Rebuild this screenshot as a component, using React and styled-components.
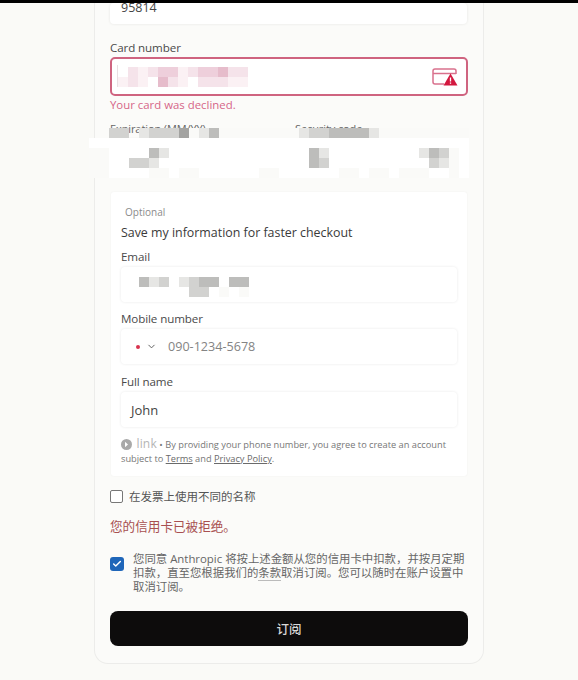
import React from 'react';
import styled, { createGlobalStyle } from 'styled-components';
import { ChevronDown, Check } from 'lucide-react';

const Global = createGlobalStyle`
  html, body { margin: 0; padding: 0; height: 680px; overflow: hidden; background: #fafaf7; }
  * { box-sizing: border-box; }
  body { font-family: "Open Sans", "Noto Sans CJK SC", sans-serif; color: #3c3c3c; }
`;

const TopBar = styled.div`height: 3px; background: #000;`;
const Panel = styled.main`
  width: 390px; height: 661px; margin-left: 94px;
  padding: 0 16px 0;
  border: 1px solid #ececea; border-top: 0;
  border-radius: 0 0 14px 14px;
  background: #fbfbf9;
  display: flex; flex-direction: column;
`;
const Field = styled.div`
  height: 35px;
  background: #fff;
  border-radius: 4px;
  box-shadow: 0 0 3px rgba(0,0,0,.09);
  display: flex; align-items: center;
  padding: 0 10px;
  font-size: 13px;
  color: #444;
  position: relative;
`;
const ZipField = styled(Field)`height: 21px; align-items: flex-start; line-height: 9px; padding: 0 11px; font-size: 12.5px; margin: 0 0 0 -1px; overflow: hidden; width: 357px;`;
const Label = styled.label`
  display: block; font-size: 11.6px; line-height: 16px; color: #4a4a4a; letter-spacing: -.1px;
`;
const CardLabel = styled(Label)`margin: 16px 0 1px -1px;`;
const CardInput = styled.div`
  position: relative; height: 39px; width: 358px; margin-left: -1px;
  background: #fff; border: 2px solid #cf6480; border-radius: 5px;
  display: flex; align-items: center; justify-content: flex-end; padding-right: 8px;
`;
const Caret = styled.span`position: absolute; left: 5px; top: 6px; width: 1px; height: 22px; background: #e9dfe2;`;
const ErrorText = styled.div`font-size: 11.4px; line-height: 16px; color: #d66688; margin: 1px 0 0 -1px;`;
const Mosaic = styled.div`
  position: absolute;
  left: ${p => p.$x}px; top: ${p => p.$y}px;
  display: grid;
  grid-template-columns: repeat(${p => p.$cols}, 10px);
  grid-auto-rows: 10px;
  pointer-events: none;
`;
const Cell = styled.i`display: block; background: ${p => p.$c};`;
const ExpiryRow = styled.div`
  position: relative; height: 63px; margin-top: 8px;
  display: grid; grid-template-columns: 171px 171px; column-gap: 14px; margin-left: -1px; width: 357px;
`;
const ExpiryCol = styled.div`display: flex; flex-direction: column; gap: 2px;`;
const ExpiryField = styled(Field)`height: 36px;`;
const SmallLabel = styled(Label)`font-size: 11px; color: #666;`;
const SaveBox = styled.section`
  width: 356px; height: 284px; margin-top: 8px;
  background: #fff; border-radius: 3px; box-shadow: 0 0 2px rgba(0,0,0,.05);
  padding: 13px 10px 0;
  display: flex; flex-direction: column;
`;
const Optional = styled.div`font-size: 10px; line-height: 14px; color: #8b8b8b; margin-left: 4px;`;
const SaveTitle = styled.div`font-size: 12.4px; line-height: 16px; color: #3a3a3a; margin-top: 6px;`;
const BoxLabel = styled(Label)`margin: ${p => p.$mt}px 0 2px;`;
const FlagDot = styled.span`width: 4px; height: 4px; border-radius: 50%; background: #d8334f; margin-left: 5px;`;
const Chev = styled(ChevronDown)`margin: 0 11px 0 6px; color: #555;`;
const Placeholder = styled.span`color: #848484; font-size: 12.6px;`;
const Legal = styled.p`margin: 10px 0 0; font-size: 9.25px; line-height: 14px; color: #777;`;
const LinkLogo = styled.span`font-size: 12px; color: #b5b5b5; margin-left: 2px; letter-spacing: .2px;`;
const LegalLink = styled.a`color: #6a6a6a; text-decoration: underline;`;
const LogoSvg = styled.svg`vertical-align: -2px;`;
const BoxCheckRow = styled.div`display: flex; align-items: center; gap: 6px; margin-top: 13px; height: 14px; font-size: 11.5px; color: #555;`;
const EmptyBox = styled.span`width: 13px; height: 13px; border: 1px solid #777; border-radius: 2px; background: #fff; margin-left: -1px;`;
const Declined = styled.div`margin: 15px 0 0 -1px; font-size: 12.6px; line-height: 18px; color: #a85050;`;
const ConsentRow = styled.div`display: flex; gap: 9px; margin-top: 16px;`;
const CheckedBox = styled.span`
  flex: none; width: 14px; height: 14px; margin: 5px 0 0 -1px; border-radius: 3px; background: #1f66b9;
  display: flex; align-items: center; justify-content: center; color: #fff;
`;
const Consent = styled.p`margin: 0; width: 336px; font-size: 11.4px; line-height: 14px; color: #666;`;
const ConsentLink = styled.span`border-bottom: 1px solid #bbb;`;
const Subscribe = styled.button`
  width: 358px; height: 35px; margin: 17px 0 0 -1px; border: 0; border-radius: 8px;
  background: #0d0c0c; color: #d9d9d9; font: inherit; font-size: 12.5px; font-weight: 500;
  font-family: "Noto Sans CJK SC", sans-serif;
`;

const palette = {
  '.': 'transparent', w: '#ffffff', a: '#fafaf8', b: '#e6e6e4', c: '#d2d2d0', d: '#bdbdbb', e: '#a3a3a1',
  p: '#fbf1f4', q: '#f5e3ea', r: '#eecfdb', s: '#e6bccb',
};

const Pixels = ({ x, y, rows }) => (
  <Mosaic $x={x} $y={y} $cols={rows[0].length}>
    {rows.join('').split('').map((k, i) => <Cell key={i} $c={palette[k]} />)}
  </Mosaic>
);

const CardIcon = () => (
  <svg width="26" height="18" viewBox="0 0 26 18" fill="none">
    <path d="M12 16H3a2 2 0 0 1-2-2V3a2 2 0 0 1 2-2h19a2 2 0 0 1 2 2v3" stroke="#d9718d" strokeWidth="1.5" />
    <path d="M1 5.5h23" stroke="#d9718d" strokeWidth="1.5" />
    <path d="M18.5 5.5 25.5 17.5H11.5Z" fill="#d3183f" />
    <path d="M18.5 9.5v4M18.5 14.6v1.2" stroke="#fff" strokeWidth="1.3" />
  </svg>
);

const LinkMark = () => (
  <LogoSvg width="11" height="11" viewBox="0 0 11 11">
    <circle cx="5.5" cy="5.5" r="5.5" fill="#a9a9a9" />
    <path d="M4 2.8 7 5.5 4 8.2Z" fill="#fff" />
  </LogoSvg>
);

export default function App() {
  return (
    <>
      <Global />
      <TopBar />
      <Panel>
        <ZipField>95814</ZipField>
        <CardLabel>Card number</CardLabel>
        <CardInput>
          <Caret />
          <Pixels x={6} y={8} rows={[
            '.qpqrrpqrrsqq',
            'pqp.sqp.qqqpp',
          ]} />
          <CardIcon />
        </CardInput>
        <ErrorText>Your card was declined.</ErrorText>
        <ExpiryRow>
          <ExpiryCol>
            <SmallLabel>Expiration (MM/YY)</SmallLabel>
            <ExpiryField />
          </ExpiryCol>
          <ExpiryCol>
            <SmallLabel>Security code</SmallLabel>
            <ExpiryField />
          </ExpiryCol>
          <Pixels x={-21} y={7} rows={[
            '..cc.bccceabdaaaaaaaabccddddbaaaaaaaaa',
            'wwwwwwwwwwwwwwwwwwwwwwwwwwwwwwwwwwwwww',
            'aawwwwdbwwwwwwwwwwwwwwdbwwwwwwwwwbdcaw',
            'aawwccbwwwwwwwwwwwwwwwdcwwwwwwwwwwcbaw',
            'aawwwwaawaawwwwwwaawwwwwwaawaawaaawwaw',
          ]} />
        </ExpiryRow>
        <SaveBox>
          <Optional>Optional</Optional>
          <SaveTitle>Save my information for faster checkout</SaveTitle>
          <BoxLabel $mt={8}>Email</BoxLabel>
          <Field>
            <Pixels x={18} y={10} rows={[
              'dbc.bcdd.dd',
              '.....cc.a.a',
            ]} />
          </Field>
          <BoxLabel $mt={9}>Mobile number</BoxLabel>
          <Field>
            <FlagDot />
            <Chev size={11} />
            <Placeholder>090-1234-5678</Placeholder>
          </Field>
          <BoxLabel $mt={10}>Full name</BoxLabel>
          <Field>John</Field>
          <Legal>
            <LinkMark /> <LinkLogo>link</LinkLogo> • By providing your phone number, you agree to create an account subject to <LegalLink>Terms</LegalLink> and <LegalLink>Privacy Policy</LegalLink>.
          </Legal>
        </SaveBox>
        <BoxCheckRow>
          <EmptyBox />
          <span>在发票上使用不同的名称</span>
        </BoxCheckRow>
        <Declined>您的信用卡已被拒绝。</Declined>
        <ConsentRow>
          <CheckedBox><Check size={10} strokeWidth={3.5} /></CheckedBox>
          <Consent>您同意 Anthropic 将按上述金额从您的信用卡中扣款，并按月定期扣款，直至您根据我们的<ConsentLink>条款</ConsentLink>取消订阅。您可以随时在账户设置中取消订阅。</Consent>
        </ConsentRow>
        <Subscribe>订阅</Subscribe>
      </Panel>
    </>
  );
}
